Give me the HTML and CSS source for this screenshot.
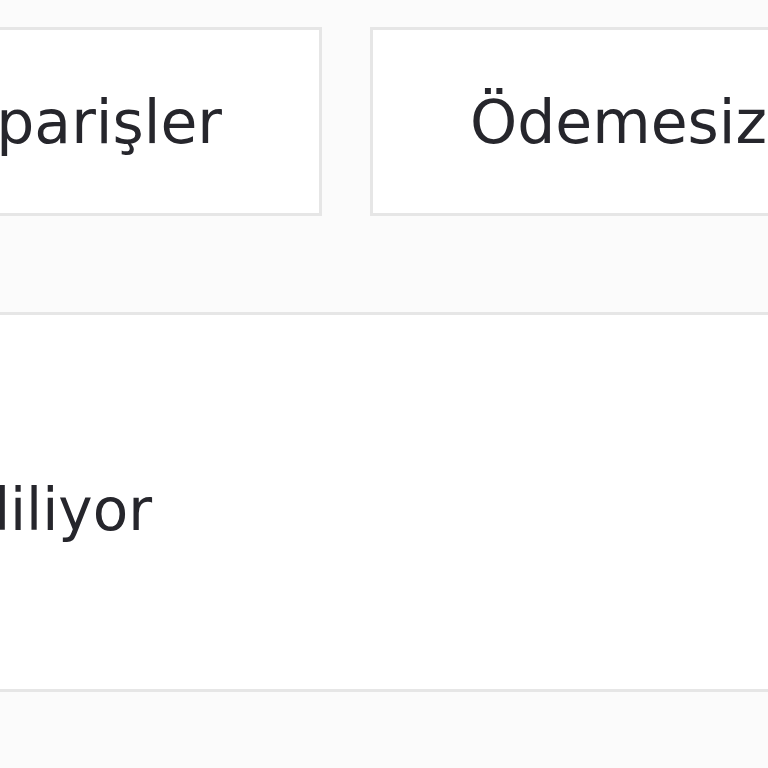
FILE: index.html
```html
<!DOCTYPE html>
<html lang="tr">
<head>
    <meta charset="UTF-8">
    <meta name="viewport" content="width=device-width, initial-scale=1.0">
    <title>Siparişler</title>
    <link rel="stylesheet" href="styles.css">
</head>
<body>
    <div class="page">
        <div class="tabs">
            <div class="tab tab-left">Siparişler</div>
            <div class="tab">Ödemesiz Siparişler</div>
        </div>
        <div class="status">
            <div class="status-cell">
                <p class="status-text">Teslim ediliyor</p>
            </div>
        </div>
    </div>
</body>
</html>
```

FILE: styles.css
```css
html, body {
    margin: 0;
    padding: 0;
    background-color: #fbfbfb;
    overflow: hidden;
}
.page {
    width: 768px;
    height: 768px;
    padding-top: 27px;
    box-sizing: border-box;
    font-family: "DejaVu Sans", "Open Sans", sans-serif;
    color: #26262c;
}
.tabs {
    display: flex;
    gap: 48px;
    margin-left: -478px;
}
.tab {
    flex: none;
    display: flex;
    align-items: center;
    height: 189px;
    box-sizing: border-box;
    padding: 0 97px;
    background-color: #fff;
    border: 3px solid #e6e6e6;
    font-size: 60px;
    white-space: nowrap;
}
.tab-left {
    width: 800px;
    justify-content: flex-end;
}
.status {
    margin-top: 96px;
    height: 380px;
    box-sizing: border-box;
    display: flex;
    align-items: center;
    background-color: #fff;
    border-top: 3px solid #e6e6e6;
    border-bottom: 3px solid #e6e6e6;
}
.status-cell {
    width: 152px;
    display: flex;
    justify-content: flex-end;
}
.status-text {
    flex: none;
    margin: 0;
    padding-top: 16px;
    font-size: 58px;
    white-space: nowrap;
}
```
